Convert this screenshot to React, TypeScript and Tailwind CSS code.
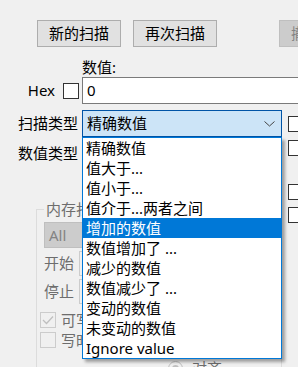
import { useState } from 'react';

const scanTypes = [
  '精确数值',
  '值大于...',
  '值小于...',
  '值介于...两者之间',
  '增加的数值',
  '数值增加了 ...',
  '减少的数值',
  '数值减少了 ...',
  '变动的数值',
  '未变动的数值',
  'Ignore value',
];

const font = "font-['Noto_Sans','Noto_Sans_CJK_SC',sans-serif]";

const Checkbox = ({ disabled, checked }: { disabled?: boolean; checked?: boolean }) => (
  <div
    className={`w-[16px] h-[16px] shrink-0 border flex items-center justify-center ${
      disabled ? 'border-[#cccccc] bg-[#f0f0f0]' : 'border-[#333333] bg-white'
    }`}
  >
    {checked && (
      <svg width="12" height="10" viewBox="0 0 12 10">
        <polyline points="1,5 4.5,8.5 11,1.5" fill="none" stroke={disabled ? '#bfbfbf' : '#333'} strokeWidth="1.3" />
      </svg>
    )}
  </div>
);

const Button = ({ children, disabled, className = '' }: { children: React.ReactNode; disabled?: boolean; className?: string }) => (
  <div
    className={`w-[84px] h-[27px] shrink-0 border flex items-center justify-center leading-none ${
      disabled ? 'bg-[#cccccc] border-[#bfbfbf] text-[#838383]' : 'bg-[#e1e1e1] border-[#adadad] text-black'
    } ${className}`}
  >
    {children}
  </div>
);

export default function App() {
  const [hovered] = useState(4);

  return (
    <div className={`w-[298px] h-[367px] overflow-hidden bg-[#f0f0f0] relative text-[15px] leading-none text-black ${font}`}>
      {/* scan buttons */}
      <div className="flex pt-[20px] pl-[37px]">
        <Button>新的扫描</Button>
        <Button className="ml-[12px]">再次扫描</Button>
        <Button className="ml-[62px]" disabled>撤销扫描</Button>
      </div>

      {/* value */}
      <div className="mt-[12px] h-[16px] flex items-center pl-[82px]">数值:</div>

      <div className="mt-[2px] flex items-center h-[27px]">
        <div className="w-[82px] shrink-0 flex items-center justify-end pr-[3px]">
          <span>Hex</span>
          <div className="ml-[8px]">
            <Checkbox />
          </div>
        </div>
        <div className="w-[240px] shrink-0 h-[27px] border border-[#7a7a7a] bg-white flex items-center pl-[4px]">0</div>
      </div>

      {/* scan type */}
      <div className="mt-[6px] flex items-center h-[27px]">
        <div className="w-[82px] shrink-0 text-right pr-[4px]">扫描类型</div>
        <div className="w-[200px] shrink-0 h-[27px] border border-[#0054a6] bg-[#cce4f7] flex items-center justify-between pl-[4px] pr-[6px]">
          <span>精确数值</span>
          <svg width="11" height="6" viewBox="0 0 11 6">
            <polyline points="0.5,0.5 5.5,5 10.5,0.5" fill="none" stroke="#444" strokeWidth="1" />
          </svg>
        </div>
        <div className="ml-[6px]">
          <Checkbox />
        </div>
      </div>

      {/* value type */}
      <div className="mt-[3px] flex h-[27px]">
        <div className="w-[82px] shrink-0 text-right pr-[4px] self-center">数值类型</div>
        <div className="w-[200px] shrink-0 h-[27px] border border-[#adadad] bg-[#e1e1e1]" />
        <div className="ml-[6px]">
          <Checkbox />
        </div>
      </div>

      {/* memory scan options + right checkboxes */}
      <div className="flex">
        <div className="ml-[36px] mt-[42px] w-[246px] shrink-0 border border-[#dcdcdc] relative pl-[7px] pt-[12px] h-[200px]">
          <span className="absolute left-[7px] top-[-9px] px-[2px] bg-[#f0f0f0] text-[#6d6d6d] leading-[16px]">内存扫描选项</span>
          <div className="w-[230px] h-[26px] bg-[#cccccc] border border-[#bfbfbf] text-[#838383] flex items-center pl-[4px]">All</div>
          <div className="mt-[3px] flex items-center h-[25px]">
            <span className="w-[35px] pl-[-1px] text-[#6d6d6d]">开始</span>
            <div className="w-[190px] h-[25px] border border-[#cccccc] bg-[#f0f0f0]" />
          </div>
          <div className="mt-[3px] flex items-center h-[25px]">
            <span className="w-[35px] text-[#6d6d6d]">停止</span>
            <div className="w-[190px] h-[25px] border border-[#cccccc] bg-[#f0f0f0]" />
          </div>
          <div className="mt-[8px] flex items-center h-[16px] ml-[-4px]">
            <Checkbox disabled checked />
            <span className="ml-[5px] text-[#6d6d6d]">可写</span>
          </div>
          <div className="mt-[4px] flex items-center h-[16px] ml-[-4px]">
            <Checkbox disabled />
            <span className="ml-[5px] text-[#6d6d6d]">写时复制</span>
          </div>
          <div className="mt-[12px] flex items-center h-[16px] ml-[124px]">
            <div className="w-[15px] h-[15px] rounded-full border border-[#bfbfbf] bg-[#f0f0f0] flex items-center justify-center">
              <div className="w-[7px] h-[7px] rounded-full bg-[#bfbfbf]" />
            </div>
            <span className="ml-[9px] text-[#6d6d6d]">对齐</span>
          </div>
        </div>
        <div className="ml-[6px] pt-[17px] flex flex-col gap-[7px]">
          <Checkbox />
          <Checkbox />
        </div>
      </div>

      {/* open scan type dropdown */}
      <div className="absolute left-[82px] top-[137px] w-[200px] border border-[#0078d7] bg-white shadow-[3px_3px_3px_rgba(0,0,0,0.35)]">
        {scanTypes.map((t, i) => (
          <div
            key={t}
            className={`h-[20px] flex items-center pl-[3px] whitespace-nowrap ${
              i === hovered ? 'bg-[#0078d7] text-white' : 'text-black'
            }`}
          >
            {t}
          </div>
        ))}
      </div>
    </div>
  );
}
